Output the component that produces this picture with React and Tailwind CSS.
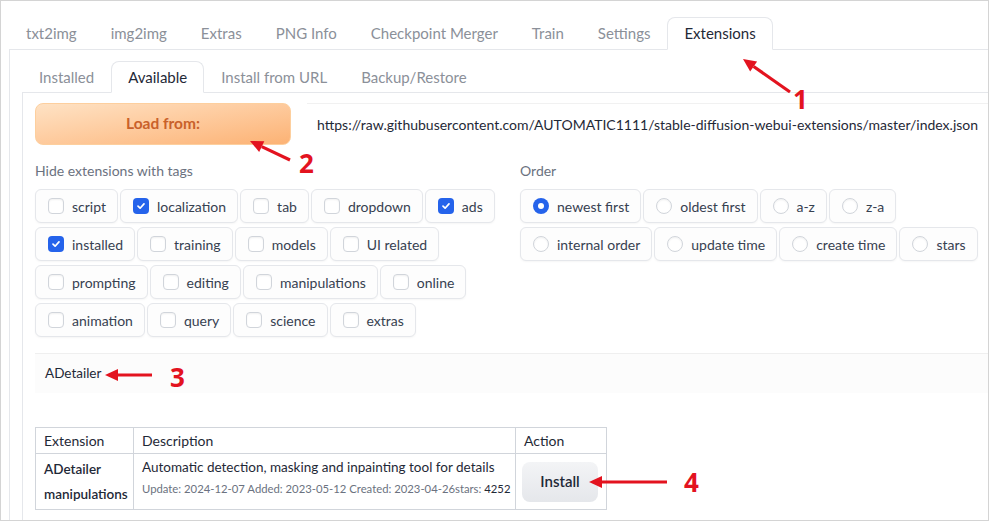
import React from 'react';

const FONT = { fontFamily: '"Source Sans Pro", Lato, "Noto Sans", sans-serif' };

const topTabs = ['txt2img', 'img2img', 'Extras', 'PNG Info', 'Checkpoint Merger', 'Train', 'Settings', 'Extensions'];
const subTabs = ['Installed', 'Available', 'Install from URL', 'Backup/Restore'];

const tagRows = [
  [['script', false], ['localization', true], ['tab', false], ['dropdown', false], ['ads', true]],
  [['installed', true], ['training', false], ['models', false], ['UI related', false]],
  [['prompting', false], ['editing', false], ['manipulations', false], ['online', false]],
  [['animation', false], ['query', false], ['science', false], ['extras', false]],
];

const orderRows = [
  ['newest first', 'oldest first', 'a-z', 'z-a'],
  ['internal order', 'update time', 'create time', 'stars'],
];

const Tab = ({ label, active, height }) => (
  <div
    className={`flex items-center px-4 border rounded-t-lg -mb-px ${height} ${
      active ? 'border-[#e5e7eb] border-b-white bg-white text-[#1f2937]' : 'border-transparent text-[#8b9099]'
    }`}
  >
    {label}
  </div>
);

const CheckBox = ({ checked }) =>
  checked ? (
    <span className="w-4 h-4 rounded-[4px] bg-[#2563eb] flex items-center justify-center shrink-0">
      <svg width="10" height="10" viewBox="0 0 10 10" fill="none">
        <path d="M2 5.2 4.1 7.2 8 2.9" stroke="white" strokeWidth="1.7" strokeLinecap="round" strokeLinejoin="round" />
      </svg>
    </span>
  ) : (
    <span className="w-4 h-4 rounded-[4px] border border-[#d1d5db] bg-white shadow-[inset_0_1px_2px_rgba(0,0,0,0.06)] shrink-0" />
  );

const Radio = ({ checked }) =>
  checked ? (
    <span className="w-4 h-4 rounded-full bg-[#2563eb] flex items-center justify-center shrink-0">
      <span className="w-[6px] h-[6px] rounded-full bg-white" />
    </span>
  ) : (
    <span className="w-4 h-4 rounded-full border border-[#d1d5db] bg-white shadow-[inset_0_1px_2px_rgba(0,0,0,0.06)] shrink-0" />
  );

const Chip = ({ children, label }) => (
  <label className="flex items-center gap-2 h-[34px] pl-3 pr-[11px] rounded-md border border-[#e5e7eb] bg-[#fdfdfd] shadow-[0_1px_2px_rgba(0,0,0,0.04)] text-[14px] text-[#374151] whitespace-nowrap">
    {children}
    <span>{label}</span>
  </label>
);

// red call-outs drawn over the page
const Arrow = ({ x1, y1, x2, y2 }) => {
  const len = Math.hypot(x2 - x1, y2 - y1);
  const dx = (x2 - x1) / len;
  const dy = (y2 - y1) / len;
  const bx = x2 - dx * 13;
  const by = y2 - dy * 13;
  const px = -dy * 6;
  const py = dx * 6;
  return (
    <g>
      <line x1={x1} y1={y1} x2={bx} y2={by} stroke="#e3131f" strokeWidth="3.2" />
      <polygon points={`${x2},${y2} ${bx + px},${by + py} ${bx - px},${by - py}`} fill="#e3131f" />
    </g>
  );
};

const Callouts = () => (
  <svg className="absolute inset-0 pointer-events-none" width="989" height="521">
    <Arrow x1={789} y1={91} x2={742} y2={58} />
    <Arrow x1={289} y1={159} x2={249} y2={140} />
    <Arrow x1={151} y1={374} x2={104} y2={374} />
    <Arrow x1={666} y1={481} x2={588} y2={481} />
    <g fill="#e3131f" fontFamily="'Open Sans', sans-serif" fontWeight="700" fontSize="26">
      <text x="792" y="108">1</text>
      <text x="298" y="172">2</text>
      <text x="169" y="386">3</text>
      <text x="683" y="491">4</text>
    </g>
  </svg>
);

export default function App() {
  return (
    <div className="relative w-[989px] h-[521px] overflow-hidden bg-white border border-[#d4d4d4]" style={FONT}>
      <div className="ml-2 pt-4">
        <div className="flex border-b border-[#e5e7eb] text-[15px]">
          {topTabs.map((t) => (
            <Tab key={t} label={t} active={t === 'Extensions'} height="h-[33px]" />
          ))}
        </div>

        <div className="border-l border-[#e5e7eb] pl-3 pt-[11px] h-[480px]">
          <div className="flex border-b border-[#e5e7eb] text-[15px]">
            {subTabs.map((t) => (
              <Tab key={t} label={t} active={t === 'Available'} height="h-[32px]" />
            ))}
          </div>

          <div className="border-l border-[#e5e7eb] pl-3 pt-[10px] h-[440px]">
            <div className="w-[955px]">
              <div className="flex gap-4 h-[42px]">
                <button className="w-[256px] shrink-0 rounded-lg border border-[#fdcf9e] bg-gradient-to-br from-[#fee2c4] to-[#fcb274] text-[#c9612a] font-bold text-[15.5px]">
                  Load from:
                </button>
                <div className="flex-1 flex items-center pl-[10px] border-t border-[#f1f1f1] text-[14px] text-[#1f2937]">
                  https://raw.githubusercontent.com/AUTOMATIC1111/stable-diffusion-webui-extensions/master/index.json
                </div>
              </div>

              <div className="flex gap-4 mt-4">
                <div className="w-[469px]">
                  <div className="text-[14px] text-[#6b7280] h-5 leading-5 mb-2">Hide extensions with tags</div>
                  <div className="flex flex-col gap-1">
                    {tagRows.map((row, i) => (
                      <div key={i} className="flex gap-[2px]">
                        {row.map(([label, checked]) => (
                          <Chip key={label} label={label}>
                            <CheckBox checked={checked} />
                          </Chip>
                        ))}
                      </div>
                    ))}
                  </div>
                </div>
                <div className="flex-1">
                  <div className="text-[14px] text-[#6b7280] h-5 leading-5 mb-2">Order</div>
                  <div className="flex flex-col gap-1">
                    {orderRows.map((row, i) => (
                      <div key={i} className="flex gap-[2px]">
                        {row.map((label) => (
                          <Chip key={label} label={label}>
                            <Radio checked={label === 'newest first'} />
                          </Chip>
                        ))}
                      </div>
                    ))}
                  </div>
                </div>
              </div>

              <div className="mt-4 h-10 flex items-center pl-[10px] bg-[#fcfcfc] border-t border-[#efefef] text-[13.5px] text-[#1f2937]">
                ADetailer
              </div>

              <table className="mt-[34px] w-[571px] table-fixed border-collapse text-[14px] text-[#1f2937]">
                <colgroup>
                  <col className="w-[98px]" />
                  <col className="w-[382px]" />
                  <col className="w-[91px]" />
                </colgroup>
                <thead>
                  <tr className="h-[26px]">
                    <th className="border border-[#d1d5db] px-2 text-left font-normal">Extension</th>
                    <th className="border border-[#d1d5db] px-2 text-left font-normal">Description</th>
                    <th className="border border-[#d1d5db] px-2 text-left font-normal">Action</th>
                  </tr>
                </thead>
                <tbody>
                  <tr className="h-[56px]">
                    <td className="border border-[#d1d5db] px-2 font-semibold text-[13.5px] leading-[25px]">
                      ADetailer
                      <br />
                      manipulations
                    </td>
                    <td className="border border-[#d1d5db] px-2 pt-[2px] align-top whitespace-nowrap">
                      <div className="leading-[22px] text-[13.5px]">Automatic detection, masking and inpainting tool for details</div>
                      <div className="text-[11.3px] text-[#6b7280] leading-[22px]">
                        Update: 2024-12-07 Added: 2023-05-12 Created: 2023-04-26stars: <span className="text-[#1f2937]">4252</span>
                      </div>
                    </td>
                    <td className="border border-[#d1d5db] px-[6px]">
                      <button className="w-[76px] h-10 rounded-lg bg-gradient-to-b from-[#f3f4f6] to-[#e5e7eb] text-[15px] font-semibold text-[#1f2937]">
                        Install
                      </button>
                    </td>
                  </tr>
                </tbody>
              </table>
            </div>
          </div>
        </div>
      </div>
      <Callouts />
    </div>
  );
}
